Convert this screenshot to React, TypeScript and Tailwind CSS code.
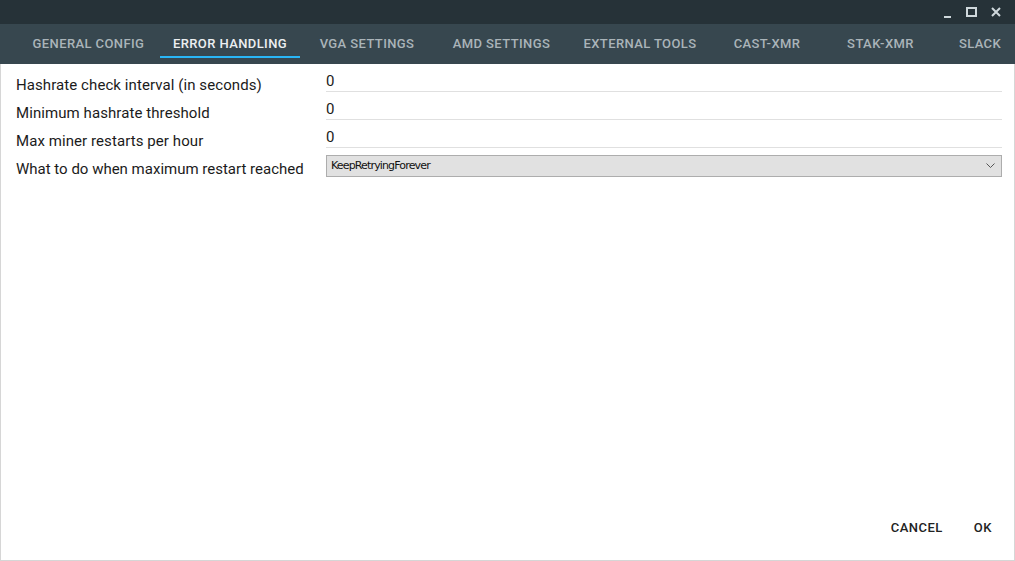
import React from 'react';

const tabs = [
  { label: 'General Config', w: 'w-[143px]' },
  { label: 'Error Handling', w: 'w-[140px]', active: true },
  { label: 'VGA Settings', w: 'w-[134px]' },
  { label: 'AMD Settings', w: 'w-[135px]' },
  { label: 'External Tools', w: 'w-[142px]' },
  { label: 'Cast-XMR', w: 'w-[112px]' },
  { label: 'Stak-XMR', w: 'w-[115px]' },
  { label: 'Slack', w: 'w-[84px]' },
];

const fields = [
  { label: 'Hashrate check interval (in seconds)', value: '0' },
  { label: 'Minimum hashrate threshold', value: '0' },
  { label: 'Max miner restarts per hour', value: '0' },
];

const App: React.FC = () => {
  return (
    <div className="w-[1015px] h-[561px] flex flex-col bg-white overflow-hidden font-['Roboto',sans-serif]">
      {/* Title bar */}
      <div className="h-[24px] bg-[#263238] flex items-center justify-end pr-[14px] gap-[14px] text-[#cfd8dc]">
        <svg width="8" height="12" viewBox="0 0 8 12">
          <rect x="0" y="10" width="7" height="2" fill="currentColor" />
        </svg>
        <svg width="11" height="10" viewBox="0 0 11 10">
          <rect x="1" y="1" width="9" height="8" fill="none" stroke="currentColor" strokeWidth="2" />
        </svg>
        <svg width="10" height="10" viewBox="0 0 10 10">
          <path d="M1 1 L9 9 M9 1 L1 9" stroke="currentColor" strokeWidth="2" />
        </svg>
      </div>

      {/* Tab bar */}
      <div className="h-[40px] bg-[#37474f] flex pl-[17px] overflow-hidden">
        {tabs.map((t) => (
          <div
            key={t.label}
            className={`${t.w} shrink-0 relative flex items-center justify-center pb-[1px] text-[13px] font-medium uppercase tracking-[0.4px] ${
              t.active ? 'text-[#eceff1]' : 'text-[#aab4b9]'
            }`}
          >
            {t.label}
            {t.active && <div className="absolute left-0 right-0 bottom-[6px] h-[2px] bg-[#29b6f6]" />}
          </div>
        ))}
      </div>

      {/* Content */}
      <div className="flex-1 flex flex-col border-x border-b border-[#d6d6d6]">
        <div className="pt-[6px] pl-[15px] pr-[12px] flex flex-col">
          {fields.map((f) => (
            <div key={f.label} className="h-[28px] flex items-start">
              <div className="w-[310px] h-[28px] pt-[2px] flex items-center text-[15px] tracking-[0.08px] text-[#1b1b1b]">
                {f.label}
              </div>
              <div className="flex-1 h-[22px] pt-[2px] border-b border-[#e0e0e0] flex items-center text-[15px] text-[#1b1b1b]">
                {f.value}
              </div>
            </div>
          ))}
          <div className="h-[28px] flex items-start">
            <div className="w-[310px] h-[28px] pt-[2px] flex items-center text-[15px] text-[#1b1b1b]">
              What to do when maximum restart reached
            </div>
            <div className="flex-1 mt-[1px] h-[22px] bg-[#e1e1e1] border border-[#adadad] flex items-center justify-between pl-[4px] pr-[6px] text-[11px] text-[#111] font-['DejaVu_Sans',sans-serif] tracking-[-0.85px]">
              <span>KeepRetryingForever</span>
              <svg width="9" height="6" viewBox="0 0 9 6">
                <path d="M0.5 0.5 L4.5 4.5 L8.5 0.5" fill="none" stroke="#555" strokeWidth="1" />
              </svg>
            </div>
          </div>
        </div>

        <div className="mt-auto flex justify-end gap-[15px] pr-[14px] pb-[16px]">
          <button className="h-[32px] px-[8px] text-[13px] font-medium tracking-[0.5px] text-[#222]">CANCEL</button>
          <button className="h-[32px] px-[8px] text-[13px] font-medium tracking-[0.5px] text-[#222]">OK</button>
        </div>
      </div>
    </div>
  );
};

export default App;
